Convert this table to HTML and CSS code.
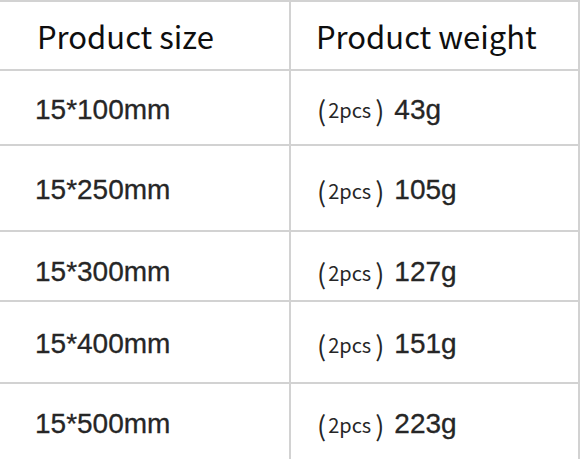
FILE: index.html
```html
<!DOCTYPE html>
<html>
<head>
<meta charset="utf-8">
<link rel="stylesheet" href="styles.css">
</head>
<body>
<div class="table">
  <div class="cell head size">Product size</div>
  <div class="cell head weight">Product weight</div>

  <div class="cell body size">15*100mm</div>
  <div class="cell body weight"><span class="paren">(</span><span class="pcs">2pcs</span><span class="paren close">)</span><span class="num">43g</span></div>

  <div class="cell body size">15*250mm</div>
  <div class="cell body weight"><span class="paren">(</span><span class="pcs">2pcs</span><span class="paren close">)</span><span class="num">105g</span></div>

  <div class="cell body size low">15*300mm</div>
  <div class="cell body weight low"><span class="paren">(</span><span class="pcs">2pcs</span><span class="paren close">)</span><span class="num">127g</span></div>

  <div class="cell body size">15*400mm</div>
  <div class="cell body weight"><span class="paren">(</span><span class="pcs">2pcs</span><span class="paren close">)</span><span class="num">151g</span></div>

  <div class="cell body size">15*500mm</div>
  <div class="cell body weight"><span class="paren">(</span><span class="pcs">2pcs</span><span class="paren close">)</span><span class="num">223g</span></div>
</div>
</body>
</html>
```

FILE: styles.css
```css
html, body {
  margin: 0;
  padding: 0;
  background: #ffffff;
}

.table {
  display: grid;
  grid-template-columns: 289px 287px;
  grid-template-rows: 67px 73px 84px 68px 80px 76px;
  gap: 2px;
  padding: 2px 2px 0 0;
  width: 580px;
  box-sizing: border-box;
  background: #d2d2d2;
}

.cell {
  background: #ffffff;
  display: flex;
  align-items: center;
  white-space: nowrap;
}

.head {
  font-family: "Noto Sans CJK SC", "Noto Sans", sans-serif;
  font-size: 31px;
  color: #0e0e0e;
}

.head.size {
  padding-left: 37px;
}

.head.weight {
  padding-left: 25px;
}

.body {
  padding-top: 4px;
  font-family: "Liberation Sans", Arial, sans-serif;
  color: #262626;
}

.body.low {
  padding-top: 12px;
}

.body.size {
  font-size: 28px;
  padding-left: 35px;
  -webkit-text-stroke: 0.3px #262626;
}

.body.weight {
  padding-left: 26px;
}

.paren {
  font-family: "Noto Sans CJK SC", sans-serif;
  font-size: 27px;
  color: #262626;
}

.paren.close {
  margin-left: 4px;
  margin-right: 10px;
}

.pcs {
  font-family: "Noto Sans CJK SC", sans-serif;
  font-size: 20px;
  margin-left: 2px;
}

.num {
  font-size: 28px;
  -webkit-text-stroke: 0.3px #262626;
}
```
